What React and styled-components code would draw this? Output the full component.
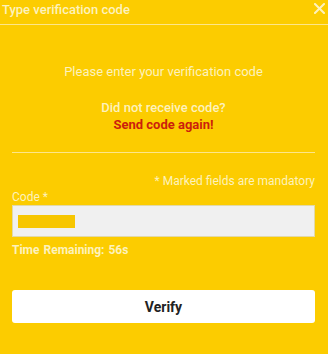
import React from "react";
import styled, { createGlobalStyle } from "styled-components";

const Global = createGlobalStyle`
  html, body { margin: 0; padding: 0; background: #fccc00; }
  body { font-family: Roboto, "Liberation Sans", Arial, sans-serif; }
`;

const Modal = styled.div`
  width: 328px;
  height: 354px;
  background: #fccc00;
  color: #fdf2bd;
  box-sizing: border-box;
`;

const Header = styled.div`
  height: 24px;
  display: flex;
  align-items: center;
  justify-content: space-between;
  padding: 0 2px 0 2px;
  border-bottom: 1px solid #fde68a;
`;

const Title = styled.div`
  font-size: 13px;
  font-weight: 500;
  color: #fdf2bd;
  margin-top: -6px;
`;

const Close = styled.button`
  background: none;
  border: 0;
  padding: 0;
  width: 14px;
  height: 14px;
  margin-top: -8px;
  display: flex;
  align-items: center;
  justify-content: center;
  cursor: pointer;
`;

const Body = styled.div`
  padding: 0 13px 0 12px;
  display: flex;
  flex-direction: column;
`;

const Centered = styled.div`
  text-align: center;
  font-size: 13px;
  line-height: 17px;
  font-weight: ${(p) => p.$weight || 400};
  color: ${(p) => p.$color || "#fdf2bd"};
  margin-top: ${(p) => p.$mt || 0}px;
`;

const Divider = styled.div`
  height: 1px;
  background: #fde68a;
  margin-top: 19px;
`;

const Note = styled.div`
  text-align: right;
  font-size: 12px;
  line-height: 16px;
  margin-top: 20px;
`;

const Label = styled.div`
  font-size: 12px;
  line-height: 16px;
`;

const InputBox = styled.div`
  height: 32px;
  box-sizing: border-box;
  background: #f0f0f0;
  border: 1px solid #e2d9a8;
  display: flex;
  align-items: center;
  padding-left: 5px;
`;

const Filled = styled.span`
  width: 57px;
  height: 13px;
  background: #f7c600;
`;

const Timer = styled.div`
  font-size: 12px;
  line-height: 16px;
  font-weight: 700;
  margin-top: 5px;
  word-spacing: 1px;
`;

const VerifyButton = styled.button`
  margin-top: 32px;
  height: 33px;
  background: #ffffff;
  border: 0;
  border-radius: 3px;
  font-family: Roboto, "Liberation Sans", Arial, sans-serif;
  font-size: 14px;
  font-weight: 700;
  color: #222;
  cursor: pointer;
`;

export default function App() {
  return (
    <>
      <Global />
      <Modal>
        <Header>
          <Title>Type verification code</Title>
          <Close aria-label="close">
            <svg width="11" height="11" viewBox="0 0 11 11">
              <path d="M1 1 L10 10 M10 1 L1 10" stroke="#fdf2bd" strokeWidth="2" strokeLinecap="square" />
            </svg>
          </Close>
        </Header>
        <Body>
          <Centered $mt={38}>Please enter your verification code</Centered>
          <Centered $mt={19} $weight={500}>Did not receive code?</Centered>
          <Centered $weight={700} $color="#cc1e0c">Send code again!</Centered>
          <Divider />
          <Note>* Marked fields are mandatory</Note>
          <Label>Code *</Label>
          <InputBox>
            <Filled />
          </InputBox>
          <Timer>Time Remaining: 56s</Timer>
          <VerifyButton>Verify</VerifyButton>
        </Body>
      </Modal>
    </>
  );
}
